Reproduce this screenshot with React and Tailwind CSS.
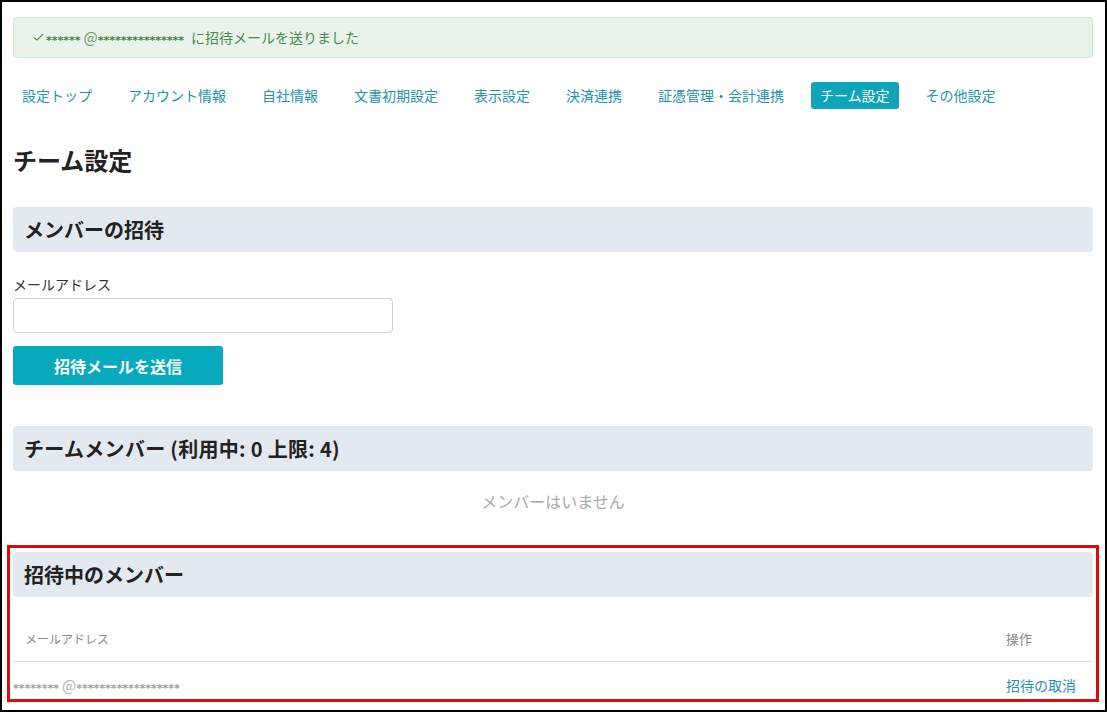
import { Check } from 'lucide-react';

const tabs = [
  { id: 'top', label: '設定トップ' },
  { id: 'account', label: 'アカウント情報' },
  { id: 'company', label: '自社情報' },
  { id: 'doc', label: '文書初期設定' },
  { id: 'display', label: '表示設定' },
  { id: 'payment', label: '決済連携' },
  { id: 'voucher', label: '証憑管理・会計連携' },
  { id: 'team', label: 'チーム設定' },
  { id: 'other', label: 'その他設定' },
];

// masked address, asterisks drawn centered like the original
function Stars({ n }) {
  return (
    <span className="font-['DejaVu_Sans'] font-bold text-[11px] leading-none relative top-[3px]">
      {'*'.repeat(n)}
    </span>
  );
}

function SectionHeader({ children }) {
  return (
    <div className="h-[45px] flex items-center px-[11px] bg-[#e3e9f1] rounded-[4px] text-[20px] font-bold text-[#222]">
      {children}
    </div>
  );
}

export default function App() {
  const active = 'team';

  return (
    <div
      className="w-[1107px] h-[712px] overflow-hidden border-2 border-black bg-white pt-[15px] pl-[11px] pr-[12px]"
      style={{ fontFamily: '"Noto Sans CJK JP", "Noto Sans", sans-serif' }}
    >
      {/* flash message */}
      <div className="h-[41px] flex items-center pl-[18px] bg-[#e8f4ea] border border-[#cfe6d4] rounded-[4px] text-[14px] text-[#3f8444]">
        <Check size={13} strokeWidth={2} className="mr-[1px] text-[#5a8a5c]" />
        <Stars n={6} />
        <span className="ml-[3px] text-[15px] text-[#6a9a6c]">@</span>
        <Stars n={15} />
        <span className="ml-[7px] text-[#4a8a4e]">に招待メールを送りました</span>
      </div>

      {/* settings tabs */}
      <nav className="mt-[24px] flex items-center text-[14px] text-[#2295a8]">
        {tabs.map((t, i) => (
          <span
            key={t.id}
            className={`h-[27px] flex items-center px-[9px] rounded-[3px] ${i > 0 ? 'ml-[18px]' : ''} ${
              active === t.id ? 'bg-[#0ea5bb] text-white' : ''
            }`}
          >
            {t.label}
          </span>
        ))}
      </nav>

      <h1 className="mt-[36px] text-[24px] font-bold text-[#222] leading-[30px]">チーム設定</h1>

      {/* invite form */}
      <div className="mt-[32px]">
        <SectionHeader>メンバーの招待</SectionHeader>
        <div className="mt-[22px] text-[14px] text-[#333] leading-[20px]">メールアドレス</div>
        <input
          type="text"
          className="mt-[4px] block w-[380px] h-[35px] border border-[#cfcfcf] rounded-[4px] px-2 outline-none"
        />
        <button className="mt-[13px] w-[210px] h-[39px] bg-[#07a9bd] text-white rounded-[3px] text-[16px] font-bold">
          招待メールを送信
        </button>
      </div>

      {/* team members */}
      <div className="mt-[41px]">
        <SectionHeader>
          <span className="tracking-[0.3px]">チームメンバー (利用中: 0 上限: 4)</span>
        </SectionHeader>
        <div className="h-[60px] flex items-center justify-center text-[16px] text-[#a9a9a9]">
          メンバーはいません
        </div>
      </div>

      {/* pending invitations (highlighted) */}
      <div className="mt-[14px] -mx-[6px] border-[3px] border-[#dd0a0a] px-[3px] pt-[4px] h-[157px]">
        <SectionHeader>招待中のメンバー</SectionHeader>
        <div className="h-[65px] flex items-end pb-[13px] border-b border-[#dedede] text-[13px] text-[#8a8a8a]">
          <span className="ml-[12px] flex-1 text-[12px]">メールアドレス</span>
          <span className="w-[87px]">操作</span>
        </div>
        <div className="h-[40px] flex items-center pt-[6px]">
          <span className="flex-1 text-[#a0a0a0] flex items-center">
            <Stars n={8} />
            <span className="ml-[3px] text-[15px] text-[#b5b5b5]">@</span>
            <Stars n={18} />
          </span>
          <span className="w-[87px] text-[14px] text-[#2295a8]">招待の取消</span>
        </div>
      </div>
    </div>
  );
}
